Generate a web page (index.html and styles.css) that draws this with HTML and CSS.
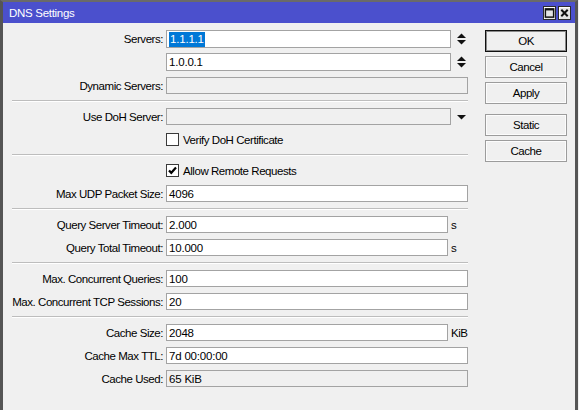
FILE: index.html
```html
<!DOCTYPE html>
<html>
<head>
<meta charset="utf-8">
<link rel="stylesheet" href="styles.css">
</head>
<body>
<div class="window">
  <div class="titlebar">
    <span class="title">DNS Settings</span>
    <span class="tbtn"><svg width="12" height="12" viewBox="0 0 12 12"><rect x="1.5" y="1.5" width="9" height="9" fill="none" stroke="#111" stroke-width="1.6"/><line x1="1.5" y1="2.4" x2="10.5" y2="2.4" stroke="#111" stroke-width="1.6"/></svg></span>
    <span class="tbtn"><svg width="12" height="12" viewBox="0 0 12 12"><path d="M2.5 2.5 L9.5 9.5 M9.5 2.5 L2.5 9.5" stroke="#111" stroke-width="2.2"/></svg></span>
  </div>
  <div class="main">
    <div class="form">
      <div class="row tall first">
        <div class="label">Servers:</div>
        <div class="ctl"><div class="field narrow"><span class="sel">1.1.1.1</span></div><svg class="spin" width="9" height="12" viewBox="0 0 9 12"><polygon points="0,5 4.5,0.5 9,5" fill="#111"/><polygon points="0,7 9,7 4.5,11.5" fill="#111"/></svg></div>
      </div>
      <div class="row tall">
        <div class="label"></div>
        <div class="ctl"><div class="field narrow">1.0.0.1</div><svg class="spin" width="9" height="12" viewBox="0 0 9 12"><polygon points="0,5 4.5,0.5 9,5" fill="#111"/><polygon points="0,7 9,7 4.5,11.5" fill="#111"/></svg></div>
      </div>
      <div class="row">
        <div class="label">Dynamic Servers:</div>
        <div class="ctl"><div class="field full disabled"></div></div>
      </div>
      <div class="sep"></div>
      <div class="row">
        <div class="label">Use DoH Server:</div>
        <div class="ctl"><div class="field narrow disabled"></div><svg class="spin" width="9" height="12" viewBox="0 0 9 12"><polygon points="0,4 9,4 4.5,8.5" fill="#111"/></svg></div>
      </div>
      <div class="row">
        <div class="label"></div>
        <div class="ctl"><span class="check"></span><span class="ctext">Verify DoH Certificate</span></div>
      </div>
      <div class="sep"></div>
      <div class="row">
        <div class="label"></div>
        <div class="ctl"><span class="check"><svg width="11" height="11" viewBox="0 0 11 11"><path d="M2 5.4 L4.3 7.8 L9 2.6" fill="none" stroke="#000" stroke-width="2.2"/></svg></span><span class="ctext">Allow Remote Requests</span></div>
      </div>
      <div class="row">
        <div class="label">Max UDP Packet Size:</div>
        <div class="ctl"><div class="field full">4096</div></div>
      </div>
      <div class="sep"></div>
      <div class="row">
        <div class="label">Query Server Timeout:</div>
        <div class="ctl"><div class="field unit">2.000</div><span class="suffix">s</span></div>
      </div>
      <div class="row">
        <div class="label">Query Total Timeout:</div>
        <div class="ctl"><div class="field unit">10.000</div><span class="suffix">s</span></div>
      </div>
      <div class="sep"></div>
      <div class="row">
        <div class="label">Max. Concurrent Queries:</div>
        <div class="ctl"><div class="field full">100</div></div>
      </div>
      <div class="row">
        <div class="label">Max. Concurrent TCP Sessions:</div>
        <div class="ctl"><div class="field full">20</div></div>
      </div>
      <div class="sep"></div>
      <div class="row">
        <div class="label">Cache Size:</div>
        <div class="ctl"><div class="field unit">2048</div><span class="suffix">KiB</span></div>
      </div>
      <div class="row">
        <div class="label">Cache Max TTL:</div>
        <div class="ctl"><div class="field full">7d 00:00:00</div></div>
      </div>
      <div class="row">
        <div class="label">Cache Used:</div>
        <div class="ctl"><div class="field full disabled">65 KiB</div></div>
      </div>
    </div>
    <div class="buttons">
      <div class="btn default">OK</div>
      <div class="btn">Cancel</div>
      <div class="btn">Apply</div>
      <div class="btn spaced">Static</div>
      <div class="btn">Cache</div>
    </div>
  </div>
</div>
</body>
</html>
```
FILE: styles.css
```css
html, body {
  margin: 0;
  padding: 0;
  background: #f0f0f0;
}
body {
  font-family: "Liberation Sans", Arial, sans-serif;
  font-size: 11.5px;
  letter-spacing: -0.45px;
  color: #000;
}
.window {
  width: 578px;
  height: 414px;
  box-sizing: border-box;
  border-left: 3px solid #555;
  border-right: 3px solid #555;
  border-top: 2px solid #6a6a6a;
  background: #f0f0f0;
}
.titlebar {
  height: 21px;
  background: #4b50cd;
  display: flex;
  align-items: center;
  padding: 0 4px 0 6px;
}
.title {
  flex: 1;
  color: #fff;
  font-size: 11.5px;
  letter-spacing: -0.3px;
}
.tbtn {
  width: 13px;
  height: 14px;
  box-sizing: border-box;
  margin-left: 2px;
  border: 1px solid #2b2b2b;
  background: #e4e4e4;
  box-shadow: inset 1px 1px 0 #fff;
  display: flex;
  align-items: center;
  justify-content: center;
}
.main {
  display: flex;
  padding: 7px 0 0 9px;
}
.form {
  width: 456px;
}
.row {
  display: grid;
  grid-template-columns: 151px 302px;
  column-gap: 3px;
  height: 17px;
  margin-bottom: 6px;
  align-items: center;
}
.row.tall {
  height: 18px;
}
.row.first {
  margin-bottom: 5px;
}
.label {
  text-align: right;
  white-space: nowrap;
}
.ctl {
  display: flex;
  align-items: center;
  height: 100%;
}
.field {
  height: 100%;
  box-sizing: border-box;
  border: 1px solid #a3a3a3;
  background: #fff;
  padding-left: 2px;
  display: flex;
  align-items: center;
  white-space: nowrap;
  letter-spacing: -0.2px;
}
.field.full {
  width: 302px;
}
.field.narrow {
  width: 285px;
}
.field.unit {
  width: 282px;
}
.field.disabled {
  background: #f0f0f0;
}
.sel {
  background: #0078d7;
  color: #fff;
  height: 15px;
  line-height: 15px;
  padding: 0 1px;
  display: inline-block;
}
.spin {
  margin-left: 6px;
}
.suffix {
  margin-left: 3px;
}
.check {
  width: 13px;
  height: 13px;
  box-sizing: border-box;
  border: 1px solid #3a3a3a;
  background: #fff;
  display: flex;
  align-items: center;
  justify-content: center;
}
.ctext {
  margin-left: 4px;
}
.sep {
  height: 0;
  border-top: 1px solid #bdbdbd;
  border-bottom: 1px solid #fff;
  margin-bottom: 6px;
}
.buttons {
  margin-left: 17px;
  width: 82px;
  display: flex;
  flex-direction: column;
  gap: 4px;
}
.btn {
  height: 22px;
  box-sizing: border-box;
  border: 1px solid #9c9c9c;
  box-shadow: inset 0 0 0 1px #fcfcfc;
  background: #f0f0f0;
  display: flex;
  align-items: center;
  justify-content: center;
}
.btn.default {
  border: 1px solid #111;
  box-shadow: inset 0 0 0 1px #8a8a8a;
}
.btn.spaced {
  margin-top: 6px;
}
```
